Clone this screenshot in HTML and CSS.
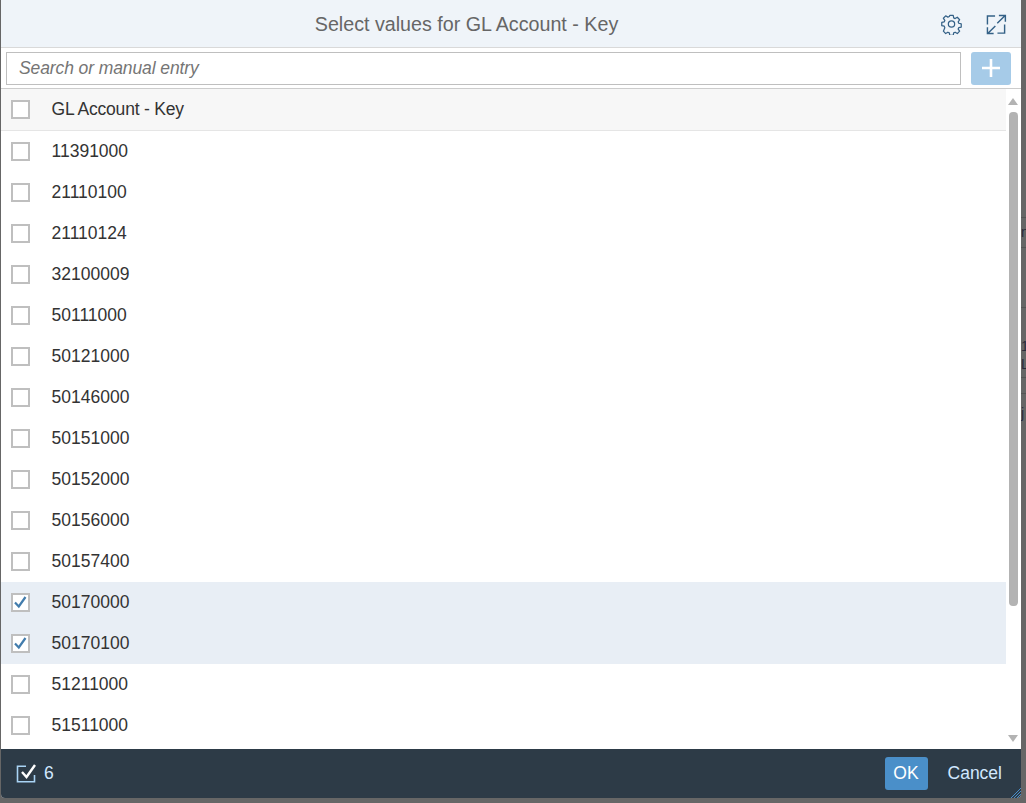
FILE: index.html
```html
<!DOCTYPE html>
<html lang="en">
<head>
<meta charset="utf-8">
<title>Select values for GL Account - Key</title>
<link rel="stylesheet" href="styles.css">
</head>
<body>
<div class="backdrop">
  <span class="bg-line l1"></span><span class="bg-line l2"></span><span class="bg-line l3"></span><span class="bg-line l4"></span><span class="bg-line l5"></span>
  <span class="bg-text t1">n</span><span class="bg-text t2">1</span><span class="bg-text t3">L</span><span class="bg-text t4">j</span>
</div>
<div class="dialog">
  <header class="head">
    <h1 class="title">Select values for GL Account - Key</h1>
    <svg class="ic gear" viewBox="0 0 22 22" fill="none" stroke="#346187" stroke-width="1.3" stroke-linejoin="round"><path d="M9.200 1.500h3.600l.5 2.600 1.500.7 2.300-1.400 2.400 2.600-1.500 2.200.6 1.500 2.600.6v3.400l-2.600.6-.6 1.500 1.500 2.200-2.400 2.500-2.300-1.400-1.500.7-.5 2.600H9.200l-.5-2.600-1.500-.7-2.300 1.400-2.400-2.500L4 14.300l-.6-1.500-2.600-.6V8.800l2.600-.6.6-1.500-1.500-2.200 2.400-2.600 2.300 1.400 1.500-.7z"/><circle cx="11" cy="10.500" r="3.300"/></svg>
    <svg class="ic full" viewBox="0 0 22 22" fill="none" stroke="#346187" stroke-width="1.500"><path d="M1.500 11V2h8M12 20h7.500v-9M19.800 1.800l-8 8M13.500 1.500h6.800v6.500M9.800 12.500l-8 8M1.500 14v6.500H8"/></svg>
  </header>
  <div class="search">
    <input class="entry" type="text" placeholder="Search or manual entry">
    <button class="add" type="button" aria-label="Add"><svg viewBox="0 0 20 20" fill="none" stroke="#fff" stroke-width="2.600"><path d="M10 1v18M1 10h18"/></svg></button>
  </div>
  <div class="body">
    <div class="table">
      <div class="row hdr"><span class="cb"></span><span class="cell hcell">GL Account - Key</span></div>
      <div class="row"><span class="cb"></span><span class="cell">11391000</span></div>
      <div class="row"><span class="cb"></span><span class="cell">21110100</span></div>
      <div class="row"><span class="cb"></span><span class="cell">21110124</span></div>
      <div class="row"><span class="cb"></span><span class="cell">32100009</span></div>
      <div class="row"><span class="cb"></span><span class="cell">50111000</span></div>
      <div class="row"><span class="cb"></span><span class="cell">50121000</span></div>
      <div class="row"><span class="cb"></span><span class="cell">50146000</span></div>
      <div class="row"><span class="cb"></span><span class="cell">50151000</span></div>
      <div class="row"><span class="cb"></span><span class="cell">50152000</span></div>
      <div class="row"><span class="cb"></span><span class="cell">50156000</span></div>
      <div class="row"><span class="cb"></span><span class="cell">50157400</span></div>
      <div class="row sel"><span class="cb"><svg viewBox="0 0 15 15" fill="none" stroke="#427cac" stroke-width="2.200"><path d="M2 7.500l3.800 4L12.500 2"/></svg></span><span class="cell">50170000</span></div>
      <div class="row sel"><span class="cb"><svg viewBox="0 0 15 15" fill="none" stroke="#427cac" stroke-width="2.200"><path d="M2 7.500l3.800 4L12.500 2"/></svg></span><span class="cell">50170100</span></div>
      <div class="row"><span class="cb"></span><span class="cell">51211000</span></div>
      <div class="row"><span class="cb"></span><span class="cell">51511000</span></div>
    </div>
    <div class="scroll">
      <span class="arrow up"></span>
      <span class="thumb"></span>
      <span class="arrow down"></span>
    </div>
  </div>
  <footer class="foot">
    <div class="count">
      <svg class="tick" viewBox="0 0 20 20" fill="none" stroke="#a9d4f5" stroke-width="1.600"><path d="M10 2.200H1.500v15.600h17V11"/><path d="M6 8l4.500 5L19 1" stroke="#fff" stroke-width="2.400"/></svg>
      <span>6</span>
    </div>
    <button class="ok" type="button">OK</button>
    <button class="cancel" type="button">Cancel</button>
    <svg class="grip" viewBox="0 0 10 10" stroke="#4a8ec8" fill="none"><path d="M10 0L0 10M10 3L3 10M10 6L6 10"/></svg>
  </footer>
</div>
</body>
</html>
```
FILE: styles.css
```css
* { box-sizing: border-box; }
html, body { margin: 0; height: 100%; overflow: hidden; background: #666; }
body { font-family: "Liberation Sans", Arial, sans-serif; position: relative; }
.backdrop { position: absolute; inset: 0; background: #666; }
.bg-line { position: absolute; left: 1021px; right: 0; height: 1px; background: #555; }
.l1 { top: 217px; } .l2 { top: 247px; } .l3 { top: 307px; } .l4 { top: 377px; } .l5 { top: 393px; }
.bg-text { position: absolute; left: 1021px; font-size: 14px; color: #2a2a3a; line-height: 14px; }
.t1 { top: 225px; } .t2 { top: 339px; } .t3 { top: 357px; } .t4 { top: 406px; }
.dialog { position: absolute; left: 1px; top: 0; width: 1020px; height: 798px; background: #fff; display: flex; flex-direction: column; border-radius: 0 0 4px 4px; overflow: hidden; }
.head { height: 48px; flex: none; background: #eff4f9; display: flex; align-items: center; position: relative; border-bottom: 1px solid #d9d9d9; }
.title { margin: 1px 0 0; width: 931px; flex: none; text-align: center; font-weight: 400; font-size: 19.700px; color: #666; }
.ic { position: absolute; width: 21px; height: 21px; top: 14px; }
.gear { left: 940px; }
.full { left: 985px; }
.search { height: 41px; flex: none; display: flex; align-items: center; gap: 10px; padding: 0 10px 0 5px; border-bottom: 1px solid #ccc; }
.entry { flex: 1; height: 33px; border: 1px solid #bfbfbf; padding: 0 12px; font: italic 17.500px "Liberation Sans", Arial, sans-serif; letter-spacing: -0.1px; color: #333; background: #fff; outline: none; }
.entry::placeholder { color: #757575; opacity: 1; }
.add { width: 40px; height: 33px; background: #a6cbe8; border: 0; border-radius: 3px; padding: 0; display: flex; align-items: center; justify-content: center; }
.add svg { width: 20px; height: 20px; }
.body { flex: 1; min-height: 0; display: flex; overflow: hidden; }
.table { width: 1005px; flex: none; }
.row { height: 41px; display: flex; align-items: center; padding-left: 10px; }
.row.hdr { background: #f7f7f7; border-bottom: 1px solid #e5e5e5; height: 42px; }
.row.sel { background: #e8eef5; }
.cb { width: 19px; height: 19px; border: 2px solid #bfbfbf; background: #fff; display: block; flex: none; }
.cb svg { display: block; width: 15px; height: 15px; }
.cell { margin-left: 21.500px; font-size: 17.500px; color: #333; }
.hcell { letter-spacing: -0.200px; }
.scroll { flex: 1; position: relative; background: #fff; }
.arrow { position: absolute; left: 2px; width: 0; height: 0; border-left: 5px solid transparent; border-right: 5px solid transparent; }
.up { top: 9px; border-bottom: 7px solid #b3b3b3; }
.down { bottom: 7px; border-top: 7px solid #b3b3b3; }
.thumb { position: absolute; left: 3px; width: 9px; top: 23px; height: 494px; background: #b3b3b3; border-radius: 4px; }
.foot { height: 49px; flex: none; background: #2d3b47; display: flex; align-items: center; padding: 0 19px 0 15px; position: relative; }
.count { flex: 1; display: flex; align-items: center; gap: 8px; color: #d1e8ff; font-size: 17.500px; }
.tick { width: 20px; height: 20px; }
.ok { width: 43px; height: 33px; background: #4a8fc9; color: #fff; border: 0; border-radius: 3px; font: 17.500px "Liberation Sans", Arial, sans-serif; padding: 0; }
.cancel { margin-left: 20px; background: none; border: 0; padding: 0; color: #d1e8ff; font: 17.500px "Liberation Sans", Arial, sans-serif; }
.grip { position: absolute; right: 0; bottom: 0; width: 10px; height: 10px; }
```
